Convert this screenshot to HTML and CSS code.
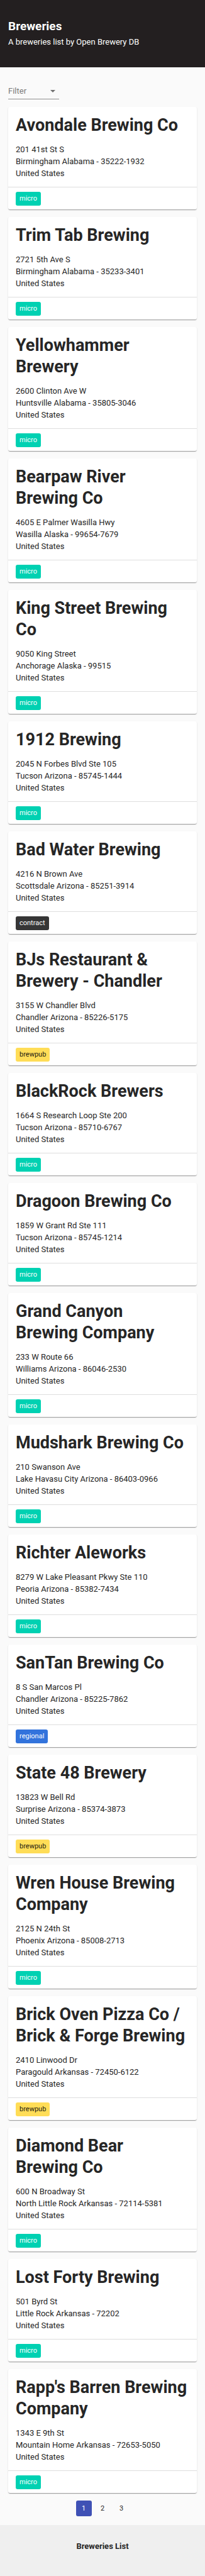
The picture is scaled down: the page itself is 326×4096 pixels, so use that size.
FILE: index.html
```html
<!DOCTYPE html>
<html lang="en">
<head>
<meta charset="utf-8">
<meta name="viewport" content="width=device-width, initial-scale=1">
<title>Breweries</title>
<link rel="stylesheet" href="styles.css">
</head>
<body>
<header class="hero">
  <h1 class="hero-title">Breweries</h1>
  <p class="hero-subtitle">A breweries list by Open Brewery DB</p>
</header>

<main class="content">
  <div class="filter">
    <select class="filter-select" aria-label="Filter">
      <option selected>Filter</option>
      <option>micro</option>
      <option>regional</option>
      <option>brewpub</option>
      <option>contract</option>
    </select>
    <svg class="filter-arrow" viewBox="0 0 8 4" aria-hidden="true"><path d="M0 0h8L4 4z"/></svg>
  </div>

  <section class="list">
    <article class="card">
      <div class="card-body">
        <h2 class="card-title">Avondale Brewing Co</h2>
        <p class="address">201 41st St S<br>Birmingham Alabama - 35222-1932<br>United States</p>
      </div>
      <div class="card-footer"><span class="tag tag-micro">micro</span></div>
    </article>
    <article class="card">
      <div class="card-body">
        <h2 class="card-title">Trim Tab Brewing</h2>
        <p class="address">2721 5th Ave S<br>Birmingham Alabama - 35233-3401<br>United States</p>
      </div>
      <div class="card-footer"><span class="tag tag-micro">micro</span></div>
    </article>
    <article class="card">
      <div class="card-body">
        <h2 class="card-title">Yellowhammer Brewery</h2>
        <p class="address">2600 Clinton Ave W<br>Huntsville Alabama - 35805-3046<br>United States</p>
      </div>
      <div class="card-footer"><span class="tag tag-micro">micro</span></div>
    </article>
    <article class="card">
      <div class="card-body">
        <h2 class="card-title">Bearpaw River Brewing Co</h2>
        <p class="address">4605 E Palmer Wasilla Hwy<br>Wasilla Alaska - 99654-7679<br>United States</p>
      </div>
      <div class="card-footer"><span class="tag tag-micro">micro</span></div>
    </article>
    <article class="card">
      <div class="card-body">
        <h2 class="card-title">King Street Brewing Co</h2>
        <p class="address">9050 King Street<br>Anchorage Alaska - 99515<br>United States</p>
      </div>
      <div class="card-footer"><span class="tag tag-micro">micro</span></div>
    </article>
    <article class="card">
      <div class="card-body">
        <h2 class="card-title">1912 Brewing</h2>
        <p class="address">2045 N Forbes Blvd Ste 105<br>Tucson Arizona - 85745-1444<br>United States</p>
      </div>
      <div class="card-footer"><span class="tag tag-micro">micro</span></div>
    </article>
    <article class="card">
      <div class="card-body">
        <h2 class="card-title">Bad Water Brewing</h2>
        <p class="address">4216 N Brown Ave<br>Scottsdale Arizona - 85251-3914<br>United States</p>
      </div>
      <div class="card-footer"><span class="tag tag-contract">contract</span></div>
    </article>
    <article class="card">
      <div class="card-body">
        <h2 class="card-title">BJs Restaurant &amp; Brewery - Chandler</h2>
        <p class="address">3155 W Chandler Blvd<br>Chandler Arizona - 85226-5175<br>United States</p>
      </div>
      <div class="card-footer"><span class="tag tag-brewpub">brewpub</span></div>
    </article>
    <article class="card">
      <div class="card-body">
        <h2 class="card-title">BlackRock Brewers</h2>
        <p class="address">1664 S Research Loop Ste 200<br>Tucson Arizona - 85710-6767<br>United States</p>
      </div>
      <div class="card-footer"><span class="tag tag-micro">micro</span></div>
    </article>
    <article class="card">
      <div class="card-body">
        <h2 class="card-title">Dragoon Brewing Co</h2>
        <p class="address">1859 W Grant Rd Ste 111<br>Tucson Arizona - 85745-1214<br>United States</p>
      </div>
      <div class="card-footer"><span class="tag tag-micro">micro</span></div>
    </article>
    <article class="card">
      <div class="card-body">
        <h2 class="card-title">Grand Canyon Brewing Company</h2>
        <p class="address">233 W Route 66<br>Williams Arizona - 86046-2530<br>United States</p>
      </div>
      <div class="card-footer"><span class="tag tag-micro">micro</span></div>
    </article>
    <article class="card">
      <div class="card-body">
        <h2 class="card-title">Mudshark Brewing Co</h2>
        <p class="address">210 Swanson Ave<br>Lake Havasu City Arizona - 86403-0966<br>United States</p>
      </div>
      <div class="card-footer"><span class="tag tag-micro">micro</span></div>
    </article>
    <article class="card">
      <div class="card-body">
        <h2 class="card-title">Richter Aleworks</h2>
        <p class="address">8279 W Lake Pleasant Pkwy Ste 110<br>Peoria Arizona - 85382-7434<br>United States</p>
      </div>
      <div class="card-footer"><span class="tag tag-micro">micro</span></div>
    </article>
    <article class="card">
      <div class="card-body">
        <h2 class="card-title">SanTan Brewing Co</h2>
        <p class="address">8 S San Marcos Pl<br>Chandler Arizona - 85225-7862<br>United States</p>
      </div>
      <div class="card-footer"><span class="tag tag-regional">regional</span></div>
    </article>
    <article class="card">
      <div class="card-body">
        <h2 class="card-title">State 48 Brewery</h2>
        <p class="address">13823 W Bell Rd<br>Surprise Arizona - 85374-3873<br>United States</p>
      </div>
      <div class="card-footer"><span class="tag tag-brewpub">brewpub</span></div>
    </article>
    <article class="card">
      <div class="card-body">
        <h2 class="card-title">Wren House Brewing Company</h2>
        <p class="address">2125 N 24th St<br>Phoenix Arizona - 85008-2713<br>United States</p>
      </div>
      <div class="card-footer"><span class="tag tag-micro">micro</span></div>
    </article>
    <article class="card">
      <div class="card-body">
        <h2 class="card-title">Brick Oven Pizza Co / Brick &amp; Forge Brewing</h2>
        <p class="address">2410 Linwood Dr<br>Paragould Arkansas - 72450-6122<br>United States</p>
      </div>
      <div class="card-footer"><span class="tag tag-brewpub">brewpub</span></div>
    </article>
    <article class="card">
      <div class="card-body">
        <h2 class="card-title">Diamond Bear Brewing Co</h2>
        <p class="address">600 N Broadway St<br>North Little Rock Arkansas - 72114-5381<br>United States</p>
      </div>
      <div class="card-footer"><span class="tag tag-micro">micro</span></div>
    </article>
    <article class="card">
      <div class="card-body">
        <h2 class="card-title">Lost Forty Brewing</h2>
        <p class="address">501 Byrd St<br>Little Rock Arkansas - 72202<br>United States</p>
      </div>
      <div class="card-footer"><span class="tag tag-micro">micro</span></div>
    </article>
    <article class="card">
      <div class="card-body">
        <h2 class="card-title">Rapp's Barren Brewing Company</h2>
        <p class="address">1343 E 9th St<br>Mountain Home Arkansas - 72653-5050<br>United States</p>
      </div>
      <div class="card-footer"><span class="tag tag-micro">micro</span></div>
    </article>
  </section>

  <nav class="pagination" aria-label="Pagination">
    <button class="page page-current" type="button" aria-current="page">1</button>
    <button class="page" type="button">2</button>
    <button class="page" type="button">3</button>
  </nav>
</main>

<footer class="site-footer"><strong>Breweries List</strong></footer>
</body>
</html>
```
FILE: styles.css
```css
* {
  box-sizing: border-box;
}

body {
  margin: 0;
  background: #fafafa;
  color: #262626;
  font-family: Roboto, "Liberation Sans", sans-serif;
  font-size: 13px;
  line-height: 19px;
}

h1,
h2,
p {
  margin: 0;
}

.hero {
  padding: 30px 13px 31px;
  background: #231f20;
  color: #fff;
}

.hero-title {
  margin-bottom: 3px;
  font-size: 19px;
  line-height: 24px;
}

.content {
  padding: 30px 13px 14px;
}

.filter {
  display: grid;
  width: 81px;
  margin-bottom: 12px;
  border-bottom: 1px solid #8e8e8e;
}

.filter-select,
.filter-arrow {
  grid-area: 1 / 1;
}

.filter-select {
  appearance: none;
  height: 20px;
  margin: 0;
  padding: 0 20px 4px 0;
  border: 0;
  background: transparent;
  color: #7a7a7a;
  font: inherit;
  line-height: 16px;
}

.filter-arrow {
  width: 8px;
  height: 4px;
  margin: 6px 6px 0 0;
  justify-self: end;
  fill: #707070;
  pointer-events: none;
}

.list {
  display: flex;
  flex-direction: column;
  gap: 12px;
}

.card {
  border-radius: 3px;
  background: #fff;
  box-shadow: 0 2px 1px -1px rgba(0, 0, 0, 0.2), 0 1px 1px rgba(0, 0, 0, 0.14), 0 1px 2px rgba(0, 0, 0, 0.12);
}

.card-body {
  padding: 12px;
}

.card-title {
  margin-bottom: 12px;
  font-size: 27px;
  line-height: 34px;
}

.card-footer {
  display: flex;
  padding: 7px 12px 6px;
  border-top: 1px solid #dedede;
}

.tag {
  height: 22px;
  padding: 0 6px;
  border-radius: 3px;
  font-size: 11px;
  line-height: 21px;
}

.tag-micro {
  background: #00d1b2;
  color: #fff;
}

.tag-regional {
  background: #3273dc;
  color: #fff;
}

.tag-contract {
  background: #363636;
  color: #fff;
}

.tag-brewpub {
  background: #ffdd57;
  color: #1c1a10;
}

.pagination {
  display: flex;
  justify-content: center;
  gap: 5px;
  margin-top: 12px;
}

.page {
  width: 25px;
  height: 25px;
  padding: 0;
  border: 0;
  border-radius: 3px;
  background: transparent;
  color: #262626;
  font: inherit;
  font-size: 11px;
}

.page-current {
  background: #3f51b5;
  color: #fff;
}

.site-footer {
  padding: 24px 13px 38px;
  background: #efefef;
  text-align: center;
}
```
